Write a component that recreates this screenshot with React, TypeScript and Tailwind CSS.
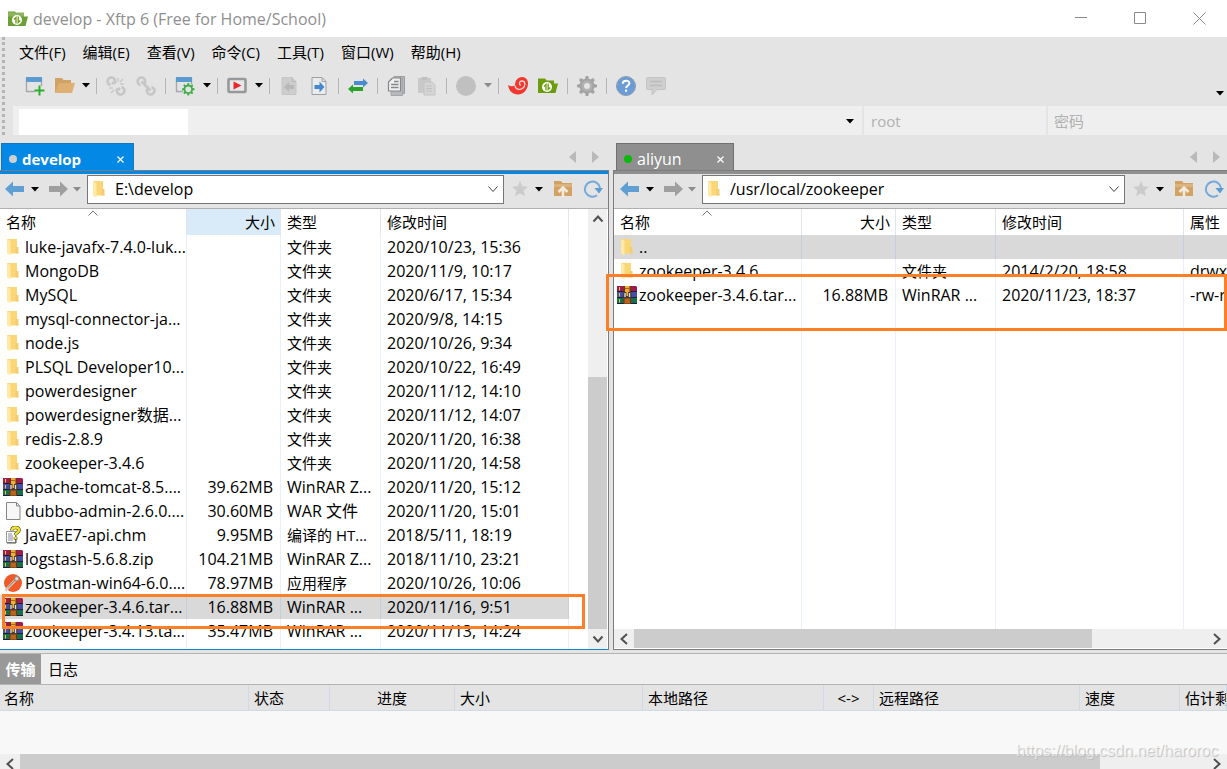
import type { ReactNode } from "react";

type Kind = "folder" | "rar" | "file" | "chm" | "postman";

interface Entry {
  kind: Kind;
  name: string;
  size?: string;
  type?: string;
  time?: string;
  attr?: string;
  selected?: boolean;
}

const localFiles: Entry[] = [
  { kind: "folder", name: "luke-javafx-7.4.0-luk...", type: "文件夹", time: "2020/10/23, 15:36" },
  { kind: "folder", name: "MongoDB", type: "文件夹", time: "2020/11/9, 10:17" },
  { kind: "folder", name: "MySQL", type: "文件夹", time: "2020/6/17, 15:34" },
  { kind: "folder", name: "mysql-connector-ja...", type: "文件夹", time: "2020/9/8, 14:15" },
  { kind: "folder", name: "node.js", type: "文件夹", time: "2020/10/26, 9:34" },
  { kind: "folder", name: "PLSQL Developer10...", type: "文件夹", time: "2020/10/22, 16:49" },
  { kind: "folder", name: "powerdesigner", type: "文件夹", time: "2020/11/12, 14:10" },
  { kind: "folder", name: "powerdesigner数据...", type: "文件夹", time: "2020/11/12, 14:07" },
  { kind: "folder", name: "redis-2.8.9", type: "文件夹", time: "2020/11/20, 16:38" },
  { kind: "folder", name: "zookeeper-3.4.6", type: "文件夹", time: "2020/11/20, 14:58" },
  { kind: "rar", name: "apache-tomcat-8.5....", size: "39.62MB", type: "WinRAR Z...", time: "2020/11/20, 15:12" },
  { kind: "file", name: "dubbo-admin-2.6.0....", size: "30.60MB", type: "WAR 文件", time: "2020/11/20, 15:01" },
  { kind: "chm", name: "JavaEE7-api.chm", size: "9.95MB", type: "编译的 HT...", time: "2018/5/11, 18:19" },
  { kind: "rar", name: "logstash-5.6.8.zip", size: "104.21MB", type: "WinRAR Z...", time: "2018/11/10, 23:21" },
  { kind: "postman", name: "Postman-win64-6.0....", size: "78.97MB", type: "应用程序", time: "2020/10/26, 10:06" },
  { kind: "rar", name: "zookeeper-3.4.6.tar...", size: "16.88MB", type: "WinRAR ...", time: "2020/11/16, 9:51", selected: true },
  { kind: "rar", name: "zookeeper-3.4.13.ta...", size: "35.47MB", type: "WinRAR ...", time: "2020/11/13, 14:24" },
];

const remoteFiles: Entry[] = [
  { kind: "folder", name: "..", selected: true },
  { kind: "folder", name: "zookeeper-3.4.6", type: "文件夹", time: "2014/2/20, 18:58", attr: "drwxr-xr-x" },
  { kind: "rar", name: "zookeeper-3.4.6.tar...", size: "16.88MB", type: "WinRAR ...", time: "2020/11/23, 18:37", attr: "-rw-r--r--" },
];

const menus = ["文件(F)", "编辑(E)", "查看(V)", "命令(C)", "工具(T)", "窗口(W)", "帮助(H)"];

/* ---------- icons ---------- */

const Svg = ({ w = 20, h = 20, children }: { w?: number; h?: number; children: ReactNode }) => (
  <svg width={w} height={h} viewBox={`0 0 ${w} ${h}`} fill="none" className="block shrink-0">
    {children}
  </svg>
);

const Down = ({ color = "#000" }: { color?: string }) => (
  <Svg w={8} h={5}>
    <path d="M0 0h8L4 4.6z" fill={color} />
  </Svg>
);

const FolderIcon = () => (
  <Svg w={20} h={18}>
    <path d="M4 1h10v13h1.500v1.500H4z" fill="#fbd677" />
    <path d="M12.500 9h3v6.500h-3z" fill="#f2cd72" />
    <path d="M4 1l3.500 2v14.500L4 15.500z" fill="#ffe9a6" />
  </Svg>
);

const RarIcon = () => (
  <Svg w={20} h={18}>
    <path d="M0 0h19l1 1v5H0z" fill="#a01c4c" />
    <path d="M0 6h20v6H0z" fill="#4450a8" />
    <path d="M0 12h20v6H0z" fill="#14704a" />
    <path d="M0 5.500h20M0 11.500h20M0 17.500h20" stroke="#231b38" />
    <path d="M2.500 1v3.500M2.500 7v3.500M2.500 13v3.500" stroke="#e8c93c" />
    <rect x="6.500" y="0" width="7.500" height="18" fill="#6b3416" />
    <path d="M8 0h4.500v6H8z" fill="#edac32" />
    <path d="M8 2.500h4.500" stroke="#a8691c" />
    <path d="M6 6.500h8.500v5H6z" fill="#3c3c40" />
    <path d="M8 7v4M12.500 7v4" stroke="#ddd" strokeWidth="1.400" />
    <path d="M10.200 5v5" stroke="#f0b63c" strokeWidth="1.600" />
    <path d="M7.500 12.500h5.500v5H7.500z" fill="#b5651f" />
  </Svg>
);

const FileIcon = () => (
  <Svg w={20} h={18}>
    <path d="M3.500.5h10l3.500 3.500v13.500H3.500z" fill="#f7f7f7" stroke="#858585" />
    <path d="M13.500.5V4H17" stroke="#858585" />
  </Svg>
);

const ChmIcon = () => (
  <Svg w={20} h={18}>
    <path d="M3.500 5.500h9v11h-9z" fill="#fff" stroke="#999" />
    <path d="M4 17h9V9" stroke="#555" />
    <path d="M5 8h4M5 10h5M5 12h5M5 14h5" stroke="#889" />
    <path d="M9 4.500c0-4 7-4 7-.5 0 2.500-3.500 2.500-3.500 5M12.500 11v2.500" stroke="#444" strokeWidth="3.600" />
    <path d="M9 4.500c0-4 7-4 7-.5 0 2.500-3.500 2.500-3.500 5M12.500 11v2" stroke="#f5e51b" strokeWidth="2.400" />
  </Svg>
);

const PostmanIcon = () => (
  <Svg w={20} h={18}>
    <circle cx="10" cy="9" r="9" fill="#f05a28" />
    <path d="M2.500 16.500L12 6.500" stroke="#d8c9c0" strokeWidth="2.600" />
    <path d="M5 13.500L12 6" stroke="#8b7f79" />
    <circle cx="13.800" cy="4.800" r="2.200" fill="#ddd" stroke="#8a8a89" />
  </Svg>
);

const fileIcons: Record<Kind, ReactNode> = {
  folder: <FolderIcon />,
  rar: <RarIcon />,
  file: <FileIcon />,
  chm: <ChmIcon />,
  postman: <PostmanIcon />,
};

const gearTeeth = "M8.700 0h2.600l.5 2.700 1.900.8L16 2l1.900 1.900-1.500 2.300.8 1.900 2.800.6v2.600l-2.800.5-.8 1.900 1.500 2.300L16 17.900l-2.300-1.500-1.900.8-.5 2.800H8.700l-.6-2.800-1.900-.8-2.300 1.500L2 16l1.500-2.300-.8-1.900L0 11.300V8.700l2.700-.6.8-1.900L2 3.900 3.900 2l2.300 1.500 1.900-.8z";

const NewIcon = () => (
  <Svg>
    <path d="M1.500 2v13.500H10M16.500 2v8" stroke="#a5a9ac" strokeWidth="1.400" />
    <rect x="1" y="1" width="16" height="5" fill="#5b9bd0" />
    <path d="M14.500 9.500v10M9.500 14.500h10" stroke="#2bae2b" strokeWidth="2" />
  </Svg>
);

const OpenIcon = () => (
  <Svg>
    <path d="M0 2h7l1.500 2H16v13H0z" fill="#cfa265" />
    <path d="M4 7h16l-3 10H0z" fill="#deb074" />
  </Svg>
);

const LinkIcon = ({ broken }: { broken?: boolean }) => (
  <Svg>
    <g stroke="#c6c6c6" strokeWidth="2.600">
      <path d="M8.500 7.500A3.800 3.800 0 1 0 4.500 9" />
      <path d="M11.500 12.500A3.800 3.800 0 1 0 15.500 11" />
      {broken ? <path d="M6 6l2 2M12 12l2 2" /> : <path d="M5.500 5.500l9 9" />}
    </g>
    {broken && <path d="M12 2v4M17 3l-3 3M14 8h4M3 12h4M8 14l-3 3" stroke="#c9c9c9" strokeWidth="1.500" />}
  </Svg>
);

const PropsIcon = () => (
  <Svg>
    <path d="M1.500 2v13.500H8M16.500 2v6" stroke="#a5a9ac" strokeWidth="1.400" />
    <rect x="1" y="1" width="16" height="5" fill="#5b9bd0" />
    <g transform="translate(7 7) scale(.63)">
      <path d={gearTeeth} fill="#41b04a" />
      <circle cx="10" cy="10" r="4.500" fill="#e4e4e4" />
    </g>
  </Svg>
);

const PlayIcon = () => (
  <Svg>
    <rect x="1.500" y="3" width="17" height="13" rx="1" fill="#e6e8e9" stroke="#96999b" strokeWidth="2.600" />
    <path d="M6.500 5.500l8 4-8 4z" fill="#e8262c" />
  </Svg>
);

const DocIcon = ({ left }: { left?: boolean }) => (
  <Svg>
    <path d="M3 1.500h10l4 4v13H3z" fill={left ? "#cdcdcd" : "#e9ebed"} stroke={left ? "#c6c6c6" : "#9ea1a3"} />
    <path d="M13 1.500v4h4" stroke={left ? "#bbb" : "#9ea1a3"} />
    {left ? (
      <path d="M5 11l5-5v3h5v4h-5v3z" fill="#b8b8b8" />
    ) : (
      <path d="M15.500 11l-5-5.500V9h-5v4h5v3.500z" fill="#4787cf" />
    )}
  </Svg>
);

const SwapIcon = () => (
  <Svg>
    <path d="M20 7l-5-4.500V5H6v4h9v2.500z" fill="#4c8bd0" />
    <path d="M0 13l5-4.500V11h10v4H5v2.500z" fill="#2ba32b" />
  </Svg>
);

const CopyIcon = () => (
  <Svg>
    <path d="M7 .5h10.500v17H7z" fill="#b6babd" stroke="#9a9da0" />
    <path d="M4 2.500h11.500v17H4z" fill="#b6babd" stroke="#a3a6a8" />
    <path d="M1.500 6l4-4h8v13h-12z" fill="#eef0f1" stroke="#85888a" strokeWidth="1.200" />
    <path d="M7 5.500h4.500M4 8.500h7.500M4 11.500h7.500" stroke="#85888a" strokeWidth="1.300" />
  </Svg>
);

const PasteIcon = () => (
  <Svg>
    <path d="M1 2h13v15H1z" fill="#c9c9c9" />
    <path d="M4.500 1h6v3h-6z" fill="#c0c0c0" />
    <path d="M7 6h8l3 3v10H7z" fill="#d5d5d5" stroke="#c4c4c4" />
    <path d="M9 10h6M9 12.500h6M9 15h6" stroke="#c0c0c0" />
  </Svg>
);

const SwirlIcon = () => (
  <Svg>
    <path d="M0 9c2.500 1.500 4.500 1.500 7 .5C7 4.500 10 1 14 1c4 0 6 3 6 6.500C20 14 15 18.500 10 18.500 4.500 18.500 1 15 0 9z" fill="#f2382e" />
    <path d="M7 9.500c0 3.500 4.500 5 7.500 3 3.500-2.500 3-7.500-.5-7.500-2.800 0-3.500 3.500-1.200 4.300" stroke="#e9d6d5" strokeWidth="1.300" />
  </Svg>
);

const XftpIcon = ({ small }: { small?: boolean }) => (
  <Svg>
    <path d="M0 2.500h7l1.500 2H16v3h4L17.500 17H0z" fill={small ? "#6c9f35" : "#6c9c0b"} />
    {small && <path d="M0 3.500h16v4H0z" fill="#8db65c" />}
    <circle cx="9" cy="11" r="5" fill="#fff" />
    <path d="M8 14.500V8.500L6 10.500M10.200 7.500v6l2-2" stroke="#6c9c0b" strokeWidth="1.300" />
  </Svg>
);

const GearIcon = () => (
  <Svg>
    <path d={gearTeeth} fill="#a3a3a3" />
    <circle cx="10" cy="10" r="5.500" fill="#b1b1b1" />
    <circle cx="10" cy="10" r="3" fill="#e4e4e4" />
  </Svg>
);

const HelpIcon = () => (
  <Svg>
    <circle cx="10" cy="10" r="9.500" fill="#6b9cd6" stroke="#8d9db3" />
    <path d="M6.800 7.700c0-4 6.600-4 6.600-.4 0 2.200-3.300 2.200-3.300 4.800M10.100 13.500v2.300" stroke="#fff" strokeWidth="2" />
  </Svg>
);

const ChatIcon = () => (
  <Svg>
    <path d="M2 1.500h16a1.500 1.500 0 0 1 1.500 1.500v9a1.500 1.500 0 0 1-1.500 1.500h-7L6 19v-5.500H2A1.500 1.500 0 0 1 .5 12V3A1.500 1.500 0 0 1 2 1.500z" fill="#cfcfcf" stroke="#c4c4c4" />
    <path d="M4 5.500h12M4 9.500h12" stroke="#bcbcbc" strokeWidth="1.500" />
  </Svg>
);

const ArrowIcon = ({ right }: { right?: boolean }) => (
  <Svg>
    {right ? (
      <path d="M20 10l-8-7.500V7H1v6h11v4.500z" fill="#9f9f9f" />
    ) : (
      <path d="M0 10l8-7.500V7h11v6H8v4.500z" fill="#609fd3" />
    )}
  </Svg>
);

const StarIcon = () => (
  <Svg w={18} h={18}>
    <path d="M9 1l2.200 5.300 5.800.5-4.400 3.800 1.400 5.600L9 13.200l-5 3 1.400-5.600L1 6.800l5.800-.5z" fill="#cbcbcb" />
  </Svg>
);

const UpFolderIcon = () => (
  <Svg w={18} h={18}>
    <path d="M0 1h7l1.500 2H18v13H0z" fill="#d3a263" />
    <path d="M0 4h18v3H0z" fill="#dbb37c" />
    <path d="M9 17v-8M4.500 12L9 7.500l4.500 4.500" stroke="#f3e9dc" strokeWidth="2.600" />
  </Svg>
);

const RefreshIcon = () => (
  <Svg>
    <path d="M14 16.300A7.600 7.600 0 1 1 17 9" stroke="#74a9dc" strokeWidth="2" />
    <path d="M11.500 9H20l-4 5.500z" fill="#5c9bd3" />
  </Svg>
);

const chevrons = {
  left: "M9 1L3.500 6 9 11",
  right: "M3 1l5.500 5L3 11",
  up: "M1.500 8.500L6 3.500l4.500 5",
  down: "M1.500 3.500L6 8.500l4.500-5",
};

const Chevron = ({ dir, thin }: { dir: keyof typeof chevrons; thin?: boolean }) => (
  <Svg w={12} h={12}>
    <path d={chevrons[dir]} stroke={thin ? "#444" : "#505050"} strokeWidth={thin ? 1 : 2} />
  </Svg>
);

/* ---------- small parts ---------- */

const Tool = ({ label, children }: { label: string; children: ReactNode }) => (
  <button aria-label={label} className="mx-[5px] w-5 shrink-0">
    {children}
  </button>
);

const Drop = ({ label, className, color }: { label: string; className: string; color?: string }) => (
  <button aria-label={label} className={`flex h-5 shrink-0 items-center justify-center ${className}`}>
    <Down color={color} />
  </button>
);

const Sep = () => (
  <div className="flex w-[9px] shrink-0 justify-center">
    <div className="h-4 w-px bg-[#b5b5b5]" />
  </div>
);

const HScroll = ({ thumb }: { thumb: string }) => (
  <div className="flex h-[19px] shrink-0 bg-[#efefef]">
    <button aria-label="向左滚动" className="flex w-5 items-center justify-center">
      <Chevron dir="left" />
    </button>
    <div className="flex-1">
      <div className={`h-full bg-[#cccccc] ${thumb}`} />
    </div>
    <button aria-label="向右滚动" className="flex w-5 items-center justify-center">
      <Chevron dir="right" />
    </button>
  </div>
);

const FileTable = ({ files, remote }: { files: Entry[]; remote?: boolean }) => {
  const head = "border-r border-[#e0e6ee] px-[6px] text-left font-normal";
  const line = "border-r border-[#e8f1fb]";
  return (
    <table className="h-full w-full table-fixed border-separate border-spacing-0 whitespace-nowrap">
      <colgroup>
        <col className={remote ? "w-[188px]" : "w-[187px]"} />
        <col className="w-[94px]" />
        <col className="w-[100px]" />
        <col className="w-[188px]" />
        <col />
      </colgroup>
      <thead className="text-[15px]">
        <tr className="h-[26px]">
          <th className={`${head} relative`}>
            名称
            <svg width="10" height="6" viewBox="0 0 10 6" fill="none" className="absolute top-px left-[88px]">
              <path d="M.5 5.500L5 1l4.500 4.500" stroke="#777" />
            </svg>
          </th>
          <th className={`border-r border-[#e0e6ee] pr-[5px] text-right font-normal ${remote ? "" : "bg-[#d9ebf9]"}`}>大小</th>
          <th className={head}>类型</th>
          <th className={head}>修改时间</th>
          <th className="overflow-hidden px-[6px] text-left font-normal">{remote && "属性"}</th>
        </tr>
      </thead>
      <tbody>
        {files.map((f) => {
          const cell = f.selected ? "border-r border-[#c5cfd9] bg-[#d9d9d9]" : line;
          return (
            <tr key={f.name} className="h-6">
              <td className={`${cell} overflow-hidden pl-[3px]`}>
                <div className="flex items-center gap-[2px]">
                  {fileIcons[f.kind]}
                  {f.name}
                </div>
              </td>
              <td className={`${cell} pr-[7px] text-right`}>{f.size}</td>
              <td className={`${cell} pl-[6px] ${f.type?.startsWith("W") ? "" : "text-[15px]"}`}>{f.type}</td>
              <td className={`${cell} pl-[6px]`}>{f.time}</td>
              <td className={`overflow-hidden pl-[6px] ${f.selected && remote ? "bg-[#d9d9d9]" : ""}`}>{f.attr}</td>
            </tr>
          );
        })}
        <tr>
          <td className={line} />
          <td className={line} />
          <td className={line} />
          <td className={line} />
          <td />
        </tr>
      </tbody>
    </table>
  );
};

interface PaneProps {
  title: string;
  path: string;
  remote?: boolean;
  className: string;
  children: ReactNode;
}

const Pane = ({ title, path, remote, className, children }: PaneProps) => (
  <section className={`flex min-w-0 flex-col ${className}`}>
    <div className="flex h-[27px] shrink-0 items-end">
      <div
        className={
          remote
            ? "ml-[3px] flex h-full w-[118px] items-center border border-b-0 border-[#707070] bg-[#8f8f8f] pt-1 pr-2 pl-[7px] text-white"
            : "ml-px flex h-full w-[133px] items-center border border-b-0 border-[#1476bd] bg-[#0388e5] pt-1 pr-2 pl-[7px] text-white"
        }
      >
        <span className={`size-2 rounded-full ${remote ? "bg-[#0cb80c]" : "bg-[#d0d0d0]"}`} />
        <button className={`flex-1 pl-[5px] text-left ${remote ? "text-[16px]" : "text-[15px] font-bold"}`}>{title}</button>
        <button aria-label="关闭标签">
          <Svg w={9} h={9}>
            <path d="M1.500 1.500l6 6M7.500 1.500l-6 6" stroke="#fff" strokeWidth="1.200" />
          </Svg>
        </button>
      </div>
      <div className={`ml-auto flex h-full items-center gap-[14px] ${remote ? "pr-[7px]" : "pr-[10px]"}`}>
        <button aria-label="上一个标签">
          <Svg w={8} h={12}>
            <path d="M7 0v12L0 6z" fill="#b9b9b9" />
          </Svg>
        </button>
        <button aria-label="下一个标签">
          <Svg w={8} h={12}>
            <path d="M1 0v12l7-6z" fill="#b9b9b9" />
          </Svg>
        </button>
      </div>
    </div>
    <div
      className={`flex min-h-0 flex-1 flex-col border-t border-[#7c7c7c] ${remote ? "border-l" : "border-r"}`}
    >
      <div className={`h-[3px] shrink-0 ${remote ? "bg-[#8f8f8f]" : "bg-[#0388e5]"}`} />
      <div className={`flex h-[35px] shrink-0 items-center border-b border-[#b0b0b0] pb-1 ${remote ? "pr-[3px] pl-[6px]" : "px-[5px]"}`}>
        <button aria-label="后退"><ArrowIcon /></button>
        <Drop label="后退历史" className="w-5" />
        <button aria-label="前进" className="ml-[3px]"><ArrowIcon right /></button>
        <Drop label="前进历史" className="w-[17px]" color="#8c8c8c" />
        <div className="ml-[2px] flex h-[29px] min-w-0 flex-1 items-center border border-[#767676] bg-white pr-1 pl-[1px]">
          <FolderIcon />
          <select aria-label="路径" className="h-full min-w-0 flex-1 appearance-none bg-white pl-[6px] outline-none">
            <option>{path}</option>
          </select>
          <Chevron dir="down" thin />
        </div>
        <button aria-label="收藏" className="ml-[7px]"><StarIcon /></button>
        <Drop label="收藏列表" className="w-5" />
        <button aria-label="上级目录" className="ml-[5px]"><UpFolderIcon /></button>
        <button aria-label="刷新" className="ml-[11px]"><RefreshIcon /></button>
      </div>
      {children}
    </div>
  </section>
);

const transferCols: [string, string][] = [
  ["名称", "w-[249px] pl-1 text-left"],
  ["状态", "w-[81px] pl-[5px] text-left"],
  ["进度", "w-[125px] text-center"],
  ["大小", "w-[188px] pl-[5px] text-left"],
  ["本地路径", "w-[181px] pl-[5px] text-left"],
  ["<->", "w-[50px] text-center"],
  ["远程路径", "w-[206px] pl-[5px] text-left"],
  ["速度", "w-[100px] pl-[5px] text-left"],
  ["估计剩余时间", "pl-[5px] text-left"],
];

export default function App() {
  return (
    <div className="relative flex h-screen flex-col overflow-hidden bg-[#e4e4e4] font-['Open_Sans','Noto_Sans_CJK_SC',sans-serif] text-[16px] leading-[24px] text-black">
      <header className="flex h-[37px] shrink-0 items-center bg-white pl-2">
        <XftpIcon small />
        <h1 className="flex-1 pl-[5px] text-[#8f8f8f]">develop - Xftp 6 (Free for Home/School)</h1>
        <div className="flex gap-[46px] pr-[21px]">
          <button aria-label="最小化">
            <Svg w={13} h={13}><path d="M0 5.500h12" stroke="#8a8a8a" /></Svg>
          </button>
          <button aria-label="最大化">
            <Svg w={13} h={13}><path d="M.5.5h11v11H.5z" stroke="#8a8a8a" /></Svg>
          </button>
          <button aria-label="关闭">
            <Svg w={13} h={13}><path d="M.5.5l12 12M12.500.5l-12 12" stroke="#8a8a8a" /></Svg>
          </button>
        </div>
      </header>

      <div className="flex h-[106px] shrink-0 pb-2">
        <div className="ml-[2px] w-[11px] shrink-0 border-l-[3px] border-dotted border-[#b4b4b4]" />
        <div className="flex min-w-0 flex-1 flex-col">
          <nav className="flex h-8 shrink-0 items-center gap-[17px] pb-[2px] pl-[6px] text-[15px]">
            {menus.map((m) => (
              <button key={m}>{m}</button>
            ))}
          </nav>
          <div className="flex h-[37px] shrink-0 items-center pr-[3px] pb-1 pl-[7px]">
            <Tool label="新建"><NewIcon /></Tool>
            <Tool label="打开"><OpenIcon /></Tool>
            <Drop label="打开列表" className="w-3" />
            <Sep />
            <Tool label="断开"><LinkIcon broken /></Tool>
            <Tool label="重新连接"><LinkIcon /></Tool>
            <Sep />
            <Tool label="属性"><PropsIcon /></Tool>
            <Drop label="属性列表" className="w-[13px]" />
            <Sep />
            <Tool label="执行"><PlayIcon /></Tool>
            <Drop label="执行列表" className="w-[13px]" />
            <Sep />
            <Tool label="接收"><DocIcon left /></Tool>
            <Tool label="发送"><DocIcon /></Tool>
            <Sep />
            <Tool label="同步"><SwapIcon /></Tool>
            <Sep />
            <Tool label="复制"><CopyIcon /></Tool>
            <Tool label="粘贴"><PasteIcon /></Tool>
            <Sep />
            <Tool label="传输状态">
              <Svg><circle cx="10" cy="10" r="10" fill="#c0c0c0" /></Svg>
            </Tool>
            <Drop label="传输状态列表" className="w-[13px]" color="#8c8c8c" />
            <Sep />
            <Tool label="Xshell"><SwirlIcon /></Tool>
            <Tool label="Xftp"><XftpIcon /></Tool>
            <Sep />
            <Tool label="选项"><GearIcon /></Tool>
            <Sep />
            <Tool label="帮助"><HelpIcon /></Tool>
            <Tool label="反馈"><ChatIcon /></Tool>
            <Drop label="更多" className="mt-4 ml-auto w-2" />
          </div>
          <div className="flex min-h-0 flex-1 gap-[2px] text-[15px]">
            <div className="flex flex-1 items-end bg-[#efefef] pl-[6px]">
              <input aria-label="主机" className="h-[26px] w-[169px] bg-white px-2 outline-none" />
              <Drop label="主机列表" className="mb-1 ml-auto w-6" />
            </div>
            <input aria-label="用户名" placeholder="root" className="w-[182px] bg-[#efefef] px-[7px] outline-none placeholder:text-[#b0b0b0]" />
            <input type="password" aria-label="密码" placeholder="密码" className="w-[179px] bg-[#efefef] px-[6px] outline-none placeholder:text-[#b0b0b0]" />
          </div>
        </div>
      </div>

      <main className="flex min-h-0 flex-1 gap-1">
        <Pane title="develop" path="E:\develop" className="flex-[609]">
          <div className="relative flex min-h-0 flex-1 border-b border-[#1283d3] bg-white">
            <div className="min-w-0 flex-1 overflow-hidden">
              <FileTable files={localFiles} />
            </div>
            <div className="mr-px flex w-[19px] shrink-0 flex-col bg-[#efefef]">
              <button aria-label="向上滚动" className="flex h-5 items-center justify-center">
                <Chevron dir="up" />
              </button>
              <div className="flex flex-1 flex-col justify-end">
                <div className="h-[63%] bg-[#cccccc]" />
              </div>
              <button aria-label="向下滚动" className="flex h-5 items-center justify-center">
                <Chevron dir="down" />
              </button>
            </div>
            <div className="absolute top-[385px] right-[23px] left-[2px] h-[35px] border-[3px] border-[#ff7f27]" />
          </div>
        </Pane>
        <Pane title="aliyun" path="/usr/local/zookeeper" remote className="flex-[614]">
          <div className="relative flex min-h-0 flex-1 flex-col border-b border-[#7c7c7c] bg-white pb-px">
            <div className="min-h-0 flex-1 overflow-hidden">
              <FileTable files={remoteFiles} remote />
            </div>
            <HScroll thumb="w-[80%]" />
            <div className="absolute top-[65px] right-0 -left-2 h-[57px] border-[3px] border-[#ff7f27]" />
          </div>
        </Pane>
      </main>

      <footer className="mt-[3px] flex h-[116px] shrink-0 flex-col border-t border-[#b4b4b4] bg-[#f8f8f8]">
        <div className="flex h-[31px] shrink-0 border-b border-[#b4b4b4] bg-[#efefef] text-[15px]">
          <button className="w-[41px] bg-[#999999] font-bold text-white">传输</button>
          <button className="px-[7px]">日志</button>
        </div>
        <table className="w-full table-fixed border-separate border-spacing-0 text-[15px] whitespace-nowrap">
          <thead>
            <tr className="h-[26px] bg-[#e4e4e4]">
              {transferCols.map(([name, cls]) => (
                <th key={name} className={`overflow-hidden border-r border-b border-[#d0d9e6] font-normal ${cls}`}>
                  {name}
                </th>
              ))}
            </tr>
          </thead>
        </table>
        <div className="mt-auto -mb-1">
          <HScroll thumb="w-[91%]" />
        </div>
      </footer>
      <span className="absolute right-[9px] bottom-[6px] font-['Liberation_Sans',sans-serif] text-[16px] text-white/60 [text-shadow:1px_1px_1px_#bbb]">
        https://blog.csdn.net/haroroc
      </span>
    </div>
  );
}
